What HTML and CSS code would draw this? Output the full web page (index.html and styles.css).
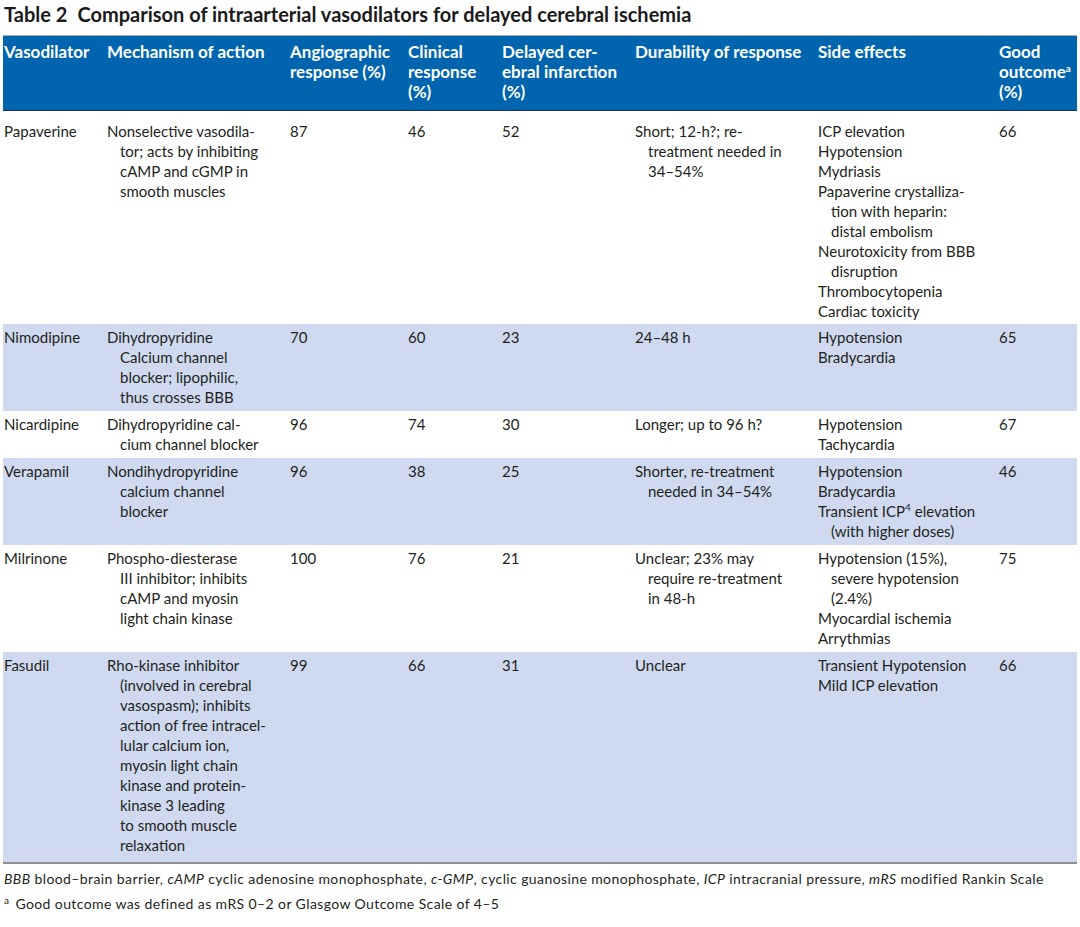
FILE: index.html
```html
<!DOCTYPE html>
<html lang="en">
<head>
<meta charset="utf-8">
<title>Table 2</title>
<link rel="stylesheet" href="styles.css">
</head>
<body>
<div class="page">
  <h1 class="title"><span class="tnum">Table 2</span>Comparison of intraarterial vasodilators for delayed cerebral ischemia</h1>
  <table class="vt">
    <colgroup>
      <col class="c1"><col class="c2"><col class="c3"><col class="c4"><col class="c5"><col class="c6"><col class="c7"><col class="c8">
    </colgroup>
    <thead>
      <tr>
        <th>Vasodilator</th>
        <th>Mechanism of action</th>
        <th>Angiographic<br>response (%)</th>
        <th>Clinical<br>response<br>(%)</th>
        <th>Delayed cer-<br>ebral infarction<br>(%)</th>
        <th>Durability of response</th>
        <th>Side effects</th>
        <th>Good<br>outcome<sup>a</sup><br>(%)</th>
      </tr>
    </thead>
    <tbody>
      <tr class="first">
        <td>Papaverine</td>
        <td><div class="h">Nonselective vasodila-<br>tor; acts by inhibiting<br>cAMP and cGMP in<br>smooth muscles</div></td>
        <td>87</td>
        <td>46</td>
        <td>52</td>
        <td><div class="h">Short; 12-h?; re-<br>treatment needed in<br>34–54%</div></td>
        <td>
          <div class="h">ICP elevation</div>
          <div class="h">Hypotension</div>
          <div class="h">Mydriasis</div>
          <div class="h">Papaverine crystalliza-<br>tion with heparin:<br>distal embolism</div>
          <div class="h">Neurotoxicity from BBB<br>disruption</div>
          <div class="h">Thrombocytopenia</div>
          <div class="h">Cardiac toxicity</div>
        </td>
        <td>66</td>
      </tr>
      <tr class="alt">
        <td>Nimodipine</td>
        <td><div class="h">Dihydropyridine<br>Calcium channel<br>blocker; lipophilic,<br>thus crosses BBB</div></td>
        <td>70</td>
        <td>60</td>
        <td>23</td>
        <td><div class="h">24–48 h</div></td>
        <td>
          <div class="h">Hypotension</div>
          <div class="h">Bradycardia</div>
        </td>
        <td>65</td>
      </tr>
      <tr>
        <td>Nicardipine</td>
        <td><div class="h">Dihydropyridine cal-<br>cium channel blocker</div></td>
        <td>96</td>
        <td>74</td>
        <td>30</td>
        <td><div class="h">Longer; up to 96 h?</div></td>
        <td>
          <div class="h">Hypotension</div>
          <div class="h">Tachycardia</div>
        </td>
        <td>67</td>
      </tr>
      <tr class="alt">
        <td>Verapamil</td>
        <td><div class="h">Nondihydropyridine<br>calcium channel<br>blocker</div></td>
        <td>96</td>
        <td>38</td>
        <td>25</td>
        <td><div class="h">Shorter, re-treatment<br>needed in 34–54%</div></td>
        <td>
          <div class="h">Hypotension</div>
          <div class="h">Bradycardia</div>
          <div class="h">Transient ICP<sup>4</sup> elevation<br>(with higher doses)</div>
        </td>
        <td>46</td>
      </tr>
      <tr>
        <td>Milrinone</td>
        <td><div class="h">Phospho-diesterase<br>III inhibitor; inhibits<br>cAMP and myosin<br>light chain kinase</div></td>
        <td>100</td>
        <td>76</td>
        <td>21</td>
        <td><div class="h">Unclear; 23% may<br>require re-treatment<br>in 48-h</div></td>
        <td>
          <div class="h">Hypotension (15%),<br>severe hypotension<br>(2.4%)</div>
          <div class="h">Myocardial ischemia</div>
          <div class="h">Arrythmias</div>
        </td>
        <td>75</td>
      </tr>
      <tr class="alt last">
        <td>Fasudil</td>
        <td><div class="h">Rho-kinase inhibitor<br>(involved in cerebral<br>vasospasm); inhibits<br>action of free intracel-<br>lular calcium ion,<br>myosin light chain<br>kinase and protein-<br>kinase 3 leading<br>to smooth muscle<br>relaxation</div></td>
        <td>99</td>
        <td>66</td>
        <td>31</td>
        <td><div class="h">Unclear</div></td>
        <td>
          <div class="h">Transient Hypotension</div>
          <div class="h">Mild ICP elevation</div>
        </td>
        <td>66</td>
      </tr>
    </tbody>
  </table>
  <p class="note"><i>BBB</i> blood–brain barrier, <i>cAMP</i> cyclic adenosine monophosphate, <i>c-GMP</i>, cyclic guanosine monophosphate, <i>ICP</i> intracranial pressure, <i>mRS</i> modified Rankin Scale</p>
  <p class="note note2"><sup>a</sup><span class="ntext">Good outcome was defined as mRS 0–2 or Glasgow Outcome Scale of 4–5</span></p>
</div>
</body>
</html>
```

FILE: styles.css
```css
html, body {
  margin: 0;
  padding: 0;
  background: #ffffff;
}

body {
  font-family: Lato, "Open Sans", "Liberation Sans", sans-serif;
  color: #231f20;
}

.page {
  padding: 3px 3px 0 3px;
}

.title {
  margin: 0 0 10px 0;
  padding-left: 1px;
  font-size: 20px;
  line-height: 22px;
  font-weight: 700;
  color: #1a1a1a;
}

.tnum {
  margin-right: 10px;
}

.vt {
  border-collapse: collapse;
  table-layout: fixed;
  width: 1074px;
}

.c1 { width: 103px; }
.c2 { width: 183px; }
.c3 { width: 118px; }
.c4 { width: 94px; }
.c5 { width: 133px; }
.c6 { width: 183px; }
.c7 { width: 181px; }
.c8 { width: 79px; }

.vt th {
  background: #0064ae;
  color: #ffffff;
  text-align: left;
  vertical-align: top;
  font-weight: 700;
  font-size: 17px;
  line-height: 20px;
  padding: 6px 0 8px 1px;
  border-top: 1px solid #a3a8ad;
  border-bottom: 1px solid #16324f;
  white-space: nowrap;
}

.vt td {
  vertical-align: top;
  text-align: left;
  font-size: 15px;
  line-height: 20px;
  padding: 3px 0 4px 1px;
  white-space: nowrap;
}

.vt tr.first td {
  padding-top: 10px;
  padding-bottom: 3px;
}

.vt tr.alt td {
  background: #cfdaf0;
}

.vt tr.last td {
  padding-bottom: 7px;
  border-bottom: 2px solid #8e8e8e;
}

.h {
  padding-left: 13px;
  text-indent: -13px;
}

sup {
  font-size: 10px;
  line-height: 0;
  vertical-align: 6px;
}

.note {
  margin: 5px 0 0 0;
  padding-left: 1px;
  font-size: 14px;
  letter-spacing: 0.4px;
  line-height: 20px;
  color: #231f20;
}

.note2 {
  margin-top: 5px;
}

.note2 sup {
  font-size: 10px;
  vertical-align: 5px;
}

.ntext {
  margin-left: 6px;
}
```
